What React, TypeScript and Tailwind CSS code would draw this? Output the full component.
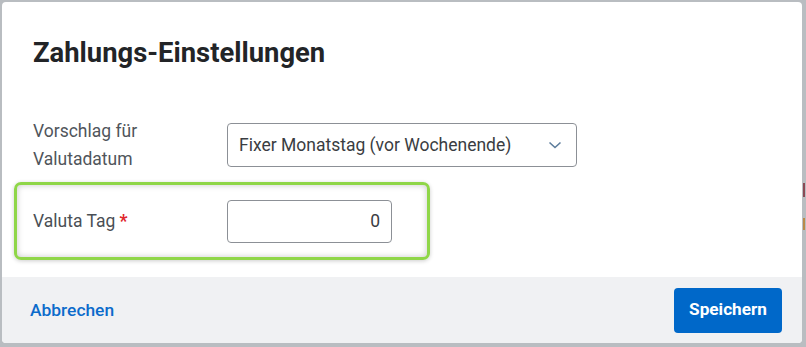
const App = () => {
  return (
    <div className="w-[806px] h-[347px] bg-[#b9bdc1] pt-[2px] pl-[2px] flex font-['Roboto',sans-serif] overflow-hidden">
      <div className="w-[800px] h-[341px] bg-white rounded-[4px] flex flex-col overflow-hidden">
        <div className="pt-[34px] pl-[31px] h-[70px] shrink-0">
          <h1 className="text-[27.4px] leading-[34px] font-bold text-[#222427]">
            Zahlungs-Einstellungen
          </h1>
        </div>

        <div className="flex items-center mt-[45px] pl-[31px] shrink-0">
          <div className="w-[194px] text-[17.5px] leading-[28px] text-[#50555b]">
            Vorschlag für
            <br />
            Valutadatum
          </div>
          <div className="w-[350px] h-[44px] border border-[#8c9096] rounded-[4px] flex items-center justify-between pl-[11px] pr-[14px]">
            <span className="text-[17.5px] text-[#3a3d42]">
              Fixer Monatstag (vor Wochenende)
            </span>
            <svg width="14" height="14" viewBox="0 0 14 14">
              <polyline
                points="1.5,4.5 7,9.5 12.5,4.5"
                fill="none"
                stroke="#5d7d9c"
                strokeWidth="1.6"
              />
            </svg>
          </div>
        </div>

        <div className="ml-[12px] mt-[9px] w-[416px] h-[78px] shrink-0 border-[3px] border-[#8fd648] rounded-[7px] flex items-center pl-[16px] shadow-[inset_0_0_6px_rgba(0,0,0,0.22),0_1px_4px_rgba(0,0,0,0.2)]">
          <div className="w-[194px] text-[17.5px] text-[#4a4f55]">
            Valuta Tag <span className="text-[#e0262b] font-bold">*</span>
          </div>
          <div className="w-[165px] h-[43px] border border-[#8c9096] rounded-[4px] flex items-center justify-end pr-[11px]">
            <span className="text-[17.5px] text-[#3a3d42]">0</span>
          </div>
        </div>

        <div className="mt-[17px] h-[66px] shrink-0 bg-[#f0f1f3] flex items-center justify-between pl-[28px] pr-[20px]">
          <span className="text-[17.4px] font-medium text-[#0b6bcb]">Abbrechen</span>
          <button className="w-[108px] h-[45px] bg-[#0068c9] rounded-[4px] text-white text-[17.2px] font-bold">
            Speichern
          </button>
        </div>
      </div>
      <div className="flex flex-col pt-[181px] pl-[1px] gap-[21px]">
        <div className="w-[2px] h-[14px] bg-[#8a4a55]" />
        <div className="w-[2px] h-[12px] bg-[#b98a4a]" />
      </div>
    </div>
  );
};

export default App;
